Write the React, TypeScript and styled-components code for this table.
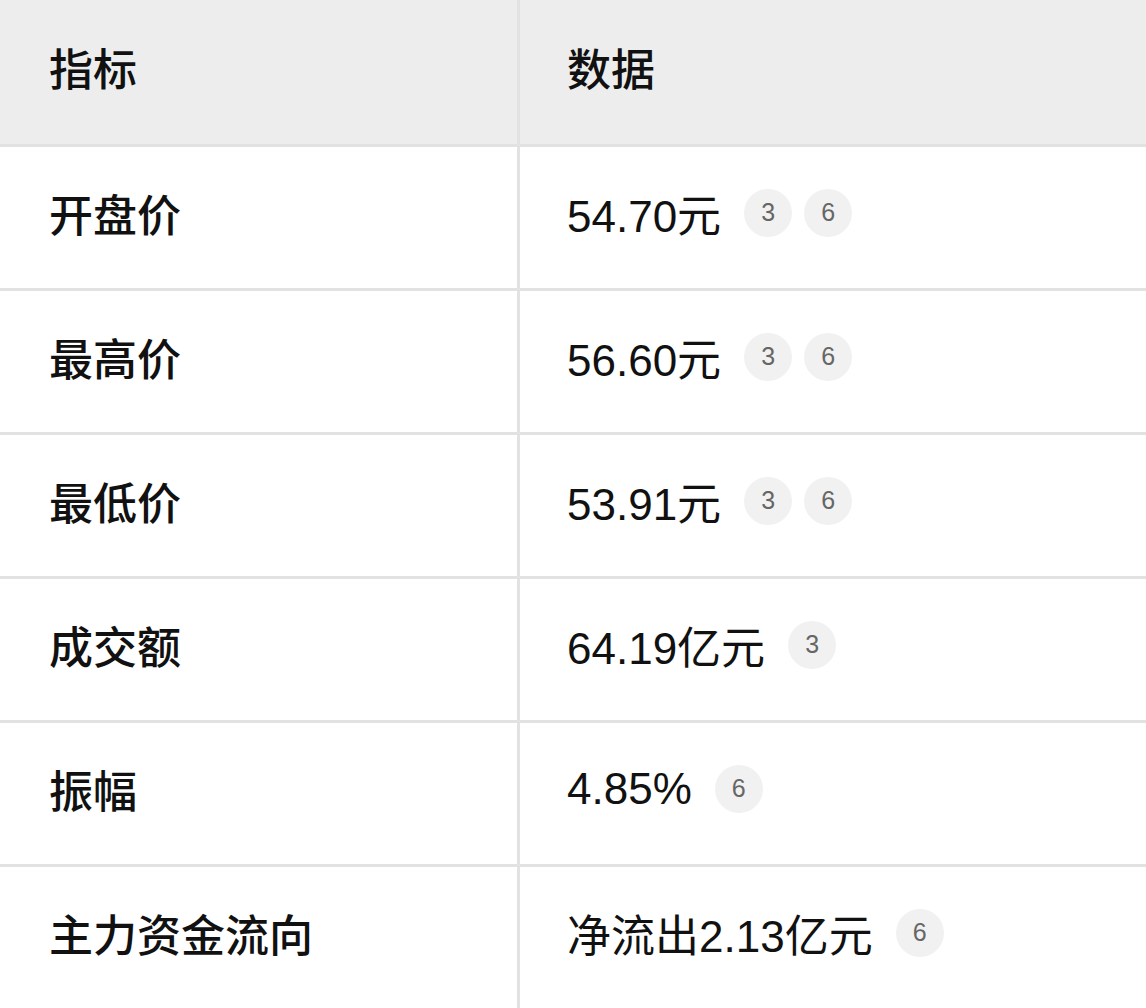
import { Fragment } from 'react';
import styled, { createGlobalStyle } from 'styled-components';

const GlobalStyle = createGlobalStyle`
  html, body {
    margin: 0;
    padding: 0;
    background: #fff;
  }
  body {
    font-family: 'Liberation Sans', 'Noto Sans CJK SC', sans-serif;
    color: #111;
  }
`;

const Table = styled.div`
  display: grid;
  grid-template-columns: 520px 1fr;
  width: 1146px;
`;

const Cell = styled.div<{ $head?: boolean; $first?: boolean }>`
  display: flex;
  align-items: center;
  height: ${({ $head }) => ($head ? '134px' : '131px')};
  padding-bottom: 10px;
  padding-left: ${({ $first }) => ($first ? '49px' : '47px')};
  background: ${({ $head }) => ($head ? '#ededed' : '#fff')};
  border-bottom: 3px solid #e2e2e2;
  border-right: ${({ $first }) => ($first ? '3px solid #e2e2e2' : 'none')};
  font-size: 44px;
  font-weight: ${({ $head, $first }) => ($head || $first ? 500 : 400)};
  color: #111;
`;

const Value = styled.span``;

const Refs = styled.span`
  display: flex;
  gap: 12px;
  margin-left: 23px;
`;

const Badge = styled.span`
  display: flex;
  align-items: center;
  justify-content: center;
  width: 48px;
  height: 48px;
  border-radius: 50%;
  background: #f1f1f1;
  color: #666;
  font-size: 25px;
  font-weight: 400;
`;

type Row = { label: string; value: string; refs: number[] };

const rows: Row[] = [
  { label: '开盘价', value: '54.70元', refs: [3, 6] },
  { label: '最高价', value: '56.60元', refs: [3, 6] },
  { label: '最低价', value: '53.91元', refs: [3, 6] },
  { label: '成交额', value: '64.19亿元', refs: [3] },
  { label: '振幅', value: '4.85%', refs: [6] },
  { label: '主力资金流向', value: '净流出2.13亿元', refs: [6] },
];

export default function App() {
  return (
    <>
      <GlobalStyle />
      <Table>
        <Cell $head $first>指标</Cell>
        <Cell $head>数据</Cell>
        {rows.map((r) => (
          <Fragment key={r.label}>
            <Cell $first>{r.label}</Cell>
            <Cell>
              <Value>{r.value}</Value>
              <Refs>
                {r.refs.map((n) => (
                  <Badge key={n}>{n}</Badge>
                ))}
              </Refs>
            </Cell>
          </Fragment>
        ))}
      </Table>
    </>
  );
}
